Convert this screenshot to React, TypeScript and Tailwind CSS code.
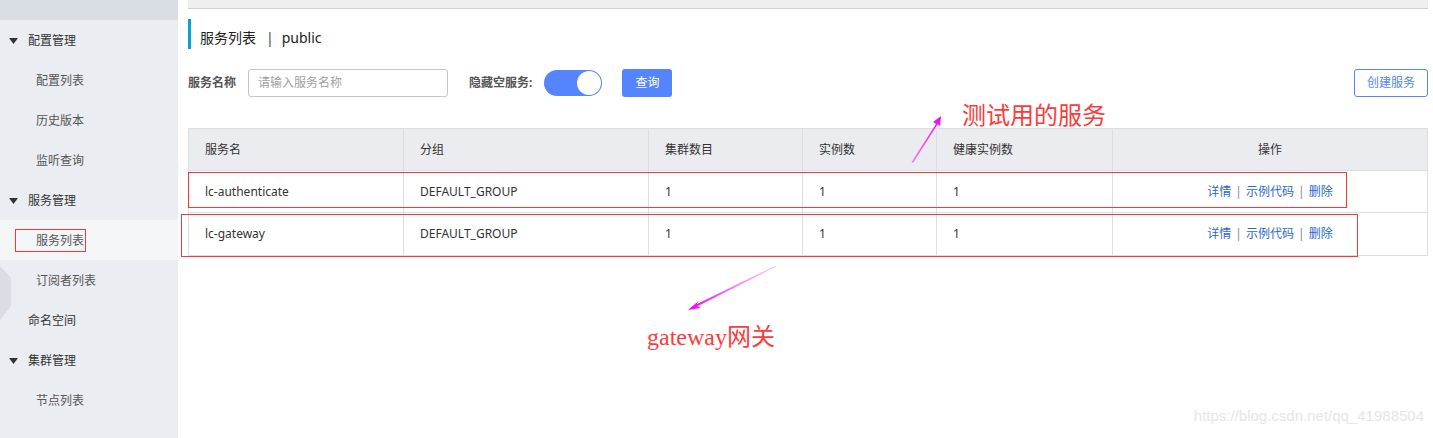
const cn = { fontFamily: '"Noto Sans", "Noto Sans CJK SC", sans-serif' }
const serif = { fontFamily: '"Liberation Serif", "Noto Sans CJK SC", serif' }

type NavItem = { label: string; level: 0 | 1; caret?: boolean; active?: boolean }

const nav: NavItem[] = [
  { label: "配置管理", level: 0, caret: true },
  { label: "配置列表", level: 1 },
  { label: "历史版本", level: 1 },
  { label: "监听查询", level: 1 },
  { label: "服务管理", level: 0, caret: true },
  { label: "服务列表", level: 1, active: true },
  { label: "订阅者列表", level: 1 },
  { label: "命名空间", level: 0 },
  { label: "集群管理", level: 0, caret: true },
  { label: "节点列表", level: 1 },
]

const columns = [
  { title: "服务名", w: "w-[215px]" },
  { title: "分组", w: "w-[245px]" },
  { title: "集群数目", w: "w-[154px]" },
  { title: "实例数", w: "w-[134px]" },
  { title: "健康实例数", w: "w-[176px]" },
]

const rows = [
  ["lc-authenticate", "DEFAULT_GROUP", "1", "1", "1"],
  ["lc-gateway", "DEFAULT_GROUP", "1", "1", "1"],
]

function Caret() {
  return (
    <svg width="9" height="6" viewBox="0 0 9 6" className="mr-[10px]">
      <path d="M0 0 H9 L4.5 6 Z" fill="#333" />
    </svg>
  )
}

function Sidebar() {
  return (
    <aside className="w-[178px] shrink-0 h-full bg-[#eaedf1] flex flex-col">
      <div className="h-[20px] bg-[#d9dde4]" />
      {nav.map((item) => (
        <div
          key={item.label}
          className={`h-10 flex items-center text-[12px] pt-[1px] ${
            item.level === 0 ? "pl-[9px] text-[#333]" : "pl-[36px] text-[#555]"
          } ${item.active ? "bg-[#f4f5f7]" : ""}`}
        >
          {item.caret && <Caret />}
          {!item.caret && item.level === 0 && <span className="w-[19px]" />}
          <span>{item.label}</span>
        </div>
      ))}
    </aside>
  )
}

function Table() {
  return (
    <div className="w-[1240px] border border-[#dcdee3] text-[12px] text-[#333]">
      <div className="flex h-[42px] bg-[#ebecf0] border-b border-[#dcdee3]">
        {columns.map((c) => (
          <div key={c.title} className={`${c.w} border-r border-[#dcdee3] flex items-center pl-4`}>
            {c.title}
          </div>
        ))}
        <div className="flex-1 flex items-center justify-center">操作</div>
      </div>
      {rows.map((r, i) => (
        <div key={i} className={`flex h-[42px] bg-white ${i === 0 ? "border-b border-[#dcdee3]" : ""}`}>
          {r.map((cell, j) => (
            <div key={j} className={`${columns[j].w} border-r border-[#dcdee3] flex items-center pl-4`}>
              {cell}
            </div>
          ))}
          <div className="flex-1 flex items-center justify-center text-[#2c68cf]">
            <span>详情</span>
            <span className="mx-[4px] text-[#888]">|</span>
            <span>示例代码</span>
            <span className="mx-[4px] text-[#888]">|</span>
            <span>删除</span>
          </div>
        </div>
      ))}
    </div>
  )
}

export default function App() {
  return (
    <div className="relative w-[1433px] h-[438px] overflow-hidden bg-white flex" style={cn}>
      <Sidebar />

      <main className="flex-1 pl-[10px] pr-[5px] flex flex-col">
        <div className="h-[9px] bg-[#efefef] border-b border-[#cfcfcf]" />

        <div className="mt-[10px] flex items-center h-[30px] border-l-[3px] border-[#0aa0d6] pl-[9px] pt-[7px] text-[14px] text-[#222]">
          <span>服务列表</span>
          <span className="ml-[10px] mr-[8px] text-[#444]">|</span>
          <span>public</span>
        </div>

        <div className="mt-[20px] flex items-center h-[28px]">
          <span className="text-[12px] font-bold text-[#555]">服务名称</span>
          <div className="ml-[12px] w-[200px] h-[28px] border border-[#c4c6cf] rounded-[3px] flex items-center pl-[9px] text-[12px] text-[#a0a0a0]">
            请输入服务名称
          </div>
          <span className="ml-[21px] text-[12px] font-bold text-[#555]">隐藏空服务:</span>
          <div className="ml-[12px] w-[58px] h-[26px] rounded-full bg-[#5584ff] flex items-center justify-end pr-[1px]">
            <div className="w-[24px] h-[24px] rounded-full bg-white" />
          </div>
          <button className="ml-[20px] w-[50px] h-[28px] rounded-[3px] bg-[#5584ff] text-white text-[12px]">
            查询
          </button>
          <button className="ml-auto w-[74px] h-[28px] rounded-[3px] border border-[#5584ff] bg-white text-[#5584ff] text-[12px]">
            创建服务
          </button>
        </div>

        <div className="mt-[31px]">
          <Table />
        </div>
      </main>

      {/* sidebar decoration */}
      <svg className="absolute left-0 top-[266px] pointer-events-none" width="12" height="56" viewBox="0 0 12 56">
        <path d="M0 0 L11 12 V40 L0 54 Z" fill="#dadde3" />
      </svg>

      {/* annotation boxes */}
      <div className="absolute left-[15px] top-[229px] w-[71px] h-[23px] border border-[#f03a3a] pointer-events-none" />
      <div className="absolute left-[188px] top-[172px] w-[1159px] h-[36px] border border-[#f03a3a] pointer-events-none" />
      <div className="absolute left-[181px] top-[214px] w-[1177px] h-[43px] border border-[#f03a3a] pointer-events-none" />

      {/* annotation arrows */}
      <svg className="absolute inset-0 pointer-events-none" width="1433" height="438">
        <defs>
          <linearGradient id="a1" x1="912" y1="162" x2="941" y2="116" gradientUnits="userSpaceOnUse">
            <stop offset="0" stopColor="#ff33ff" stopOpacity="0.6" />
            <stop offset="1" stopColor="#ee00ee" />
          </linearGradient>
          <linearGradient id="a2" x1="776" y1="266" x2="688" y2="310" gradientUnits="userSpaceOnUse">
            <stop offset="0" stopColor="#ff66ff" stopOpacity="0.4" />
            <stop offset="1" stopColor="#ee00ee" />
          </linearGradient>
        </defs>
        <path d="M911.5 162 L936 124 L933 122 L941 116 L940 126 L937.5 124.5 L913 163 Z" fill="url(#a1)" />
        <path d="M776 265.5 L697 304 L698.5 301 L688 310 L700.5 308 L698 306 L776.5 266.5 Z" fill="url(#a2)" />
      </svg>

      {/* annotation text */}
      <div className="absolute left-[962px] top-[104px] text-[24px] leading-none text-[#ff3a3a] pointer-events-none" style={serif}>
        测试用的服务
      </div>
      <div className="absolute left-[647px] top-[325px] text-[24px] leading-none text-[#ff3a3a] pointer-events-none" style={serif}>
        gateway网关
      </div>

      <div
        className="absolute right-[9px] bottom-[11px] text-[15px] text-[#e6e6e6] pointer-events-none"
        style={{ fontFamily: '"Liberation Sans", sans-serif' }}
      >
        https://blog.csdn.net/qq_41988504
      </div>
    </div>
  )
}
